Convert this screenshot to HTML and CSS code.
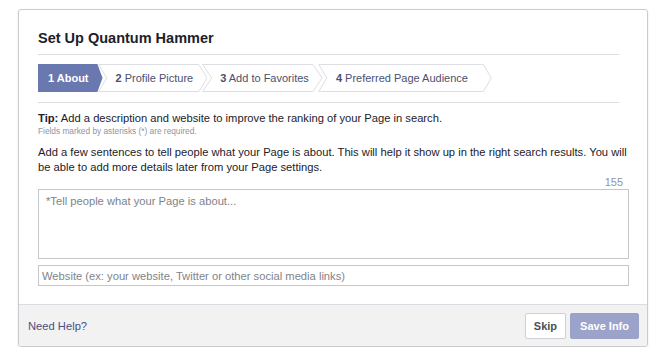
FILE: index.html
```html
<!DOCTYPE html>
<html lang="en">
<head>
  <meta charset="UTF-8" />
  <title>Set Up Quantum Hammer</title>
  <link rel="stylesheet" href="styles.css">
</head>
<body>

  <div class="dialog">
    <div class="body">
      <h1 class="title">Set Up Quantum Hammer</h1>

      <!-- Steps -->
      <div class="steps">
        <div class="step active">
          <svg class="step-bg" viewBox="0 0 100 28" preserveAspectRatio="none"><polygon points="0,0 92,0 100,14 92,28 0,28" /></svg>
          <span><b>1</b> About</span>
        </div>
        <div class="step">
          <svg class="step-bg" viewBox="0 0 100 28" preserveAspectRatio="none"><polygon points="0.5,0.5 92,0.5 99.5,14 92,27.5 0.5,27.5 8,14" /></svg>
          <span><b>2</b> Profile Picture</span>
        </div>
        <div class="step">
          <svg class="step-bg" viewBox="0 0 100 28" preserveAspectRatio="none"><polygon points="0.5,0.5 92,0.5 99.5,14 92,27.5 0.5,27.5 8,14" /></svg>
          <span><b>3</b> Add to Favorites</span>
        </div>
        <div class="step last">
          <svg class="step-bg" viewBox="0 0 100 28" preserveAspectRatio="none"><polygon points="0.5,0.5 95,0.5 99.5,14 95,27.5 0.5,27.5 5,14" /></svg>
          <span><b>4</b> Preferred Page Audience</span>
        </div>
      </div>

      <p class="tip"><b>Tip:</b> Add a description and website to improve the ranking of your Page in search.</p>
      <p class="required">Fields marked by asterisks (*) are required.</p>
      <p class="intro">Add a few sentences to tell people what your Page is about. This will help it show up in the right search results. You will be able to add more details later from your Page settings.</p>

      <div class="counter">155</div>
      <textarea class="about" placeholder="*Tell people what your Page is about..."></textarea>
      <input class="website" type="text" placeholder="Website (ex: your website, Twitter or other social media links)" />
    </div>

    <div class="footer">
      <a class="help" href="#">Need Help?</a>
      <div class="actions">
        <button class="btn">Skip</button>
        <button class="btn primary">Save Info</button>
      </div>
    </div>
  </div>

</body>
</html>
```

FILE: styles.css
```css
body {
  margin: 0;
  background: #fff;
  font-family: "Liberation Sans", Arial, sans-serif;
  color: #1d2129;
}

.dialog {
  width: 628px;
  margin: 9px 0 0 18px;
  border: 1px solid #c9cbcf;
  border-radius: 3px;
  box-shadow: 0 1px 2px rgba(0,0,0,0.12);
  overflow: hidden;
}

.body {
  padding: 0 18px 18px 19px;
}

.title {
  margin: 0 10px 0 0;
  padding: 19px 0 7px;
  font-size: 14.5px;
  line-height: 18px;
  font-weight: bold;
  border-bottom: 1px solid #dadde1;
}

/* Steps */
.steps {
  display: flex;
  height: 28px;
  margin: 9px 10px 0 0;
  padding-bottom: 10px;
  border-bottom: 1px solid #dadde1;
}

.step {
  position: relative;
  display: flex;
  align-items: center;
  padding: 0 14px 0 18px;
  margin-left: -5px;
  font-size: 11px;
  color: #4b4f6e;
}

.step:first-child {
  margin-left: 0;
  padding-left: 10px;
}

.step.last {
  padding-right: 24px;
}

.step-bg {
  position: absolute;
  top: 0;
  left: 0;
  width: 100%;
  height: 100%;
}

.step-bg polygon {
  fill: #fff;
  stroke: #dcdee3;
  stroke-width: 1;
  vector-effect: non-scaling-stroke;
}

.step span {
  position: relative;
}

.step.active {
  color: #fff;
  font-weight: bold;
}

.step.active polygon {
  fill: #6a78b0;
  stroke: none;
}

.tip {
  margin: 7px 0 0;
  font-size: 11.2px;
  line-height: 16px;
}

.required {
  margin: 0;
  font-size: 8.3px;
  line-height: 11px;
  color: #90949c;
}

.intro {
  margin: 8px 0 0;
  font-size: 11.2px;
  line-height: 15px;
  color: #1d2129;
}

.counter {
  text-align: right;
  padding-right: 6px;
  font-size: 11px;
  line-height: 14px;
  color: #90949c;
}

.about,
.website {
  display: block;
  box-sizing: border-box;
  width: 100%;
  margin: 0;
  border: 1px solid #c4c7cc;
  font-family: "Liberation Sans", Arial, sans-serif;
  font-size: 11.2px;
  color: #1d2129;
  resize: none;
  outline: none;
}

.about {
  height: 70px;
  padding: 5px 7px;
}

.website {
  height: 21px;
  margin-top: 6px;
  padding: 0 3px;
}

.about::placeholder,
.website::placeholder {
  color: #7f8389;
}

/* Footer */
.footer {
  display: flex;
  align-items: center;
  justify-content: space-between;
  height: 41px;
  padding: 0 8px 0 9px;
  background: #f2f2f2;
  border-top: 1px solid #dadde1;
}

.help {
  font-size: 11.2px;
  color: #4b4f80;
  text-decoration: none;
}

.actions {
  display: flex;
  gap: 4px;
}

.btn {
  height: 26px;
  padding: 0 8px;
  border: 1px solid #ced0d4;
  border-radius: 2px;
  background: #fff;
  font-family: "Liberation Sans", Arial, sans-serif;
  font-size: 11px;
  font-weight: bold;
  color: #4b4f56;
}

.btn.primary {
  padding: 0 9px;
  background: #9ba3ca;
  border-color: #9ba3ca;
  color: #fff;
}
```
